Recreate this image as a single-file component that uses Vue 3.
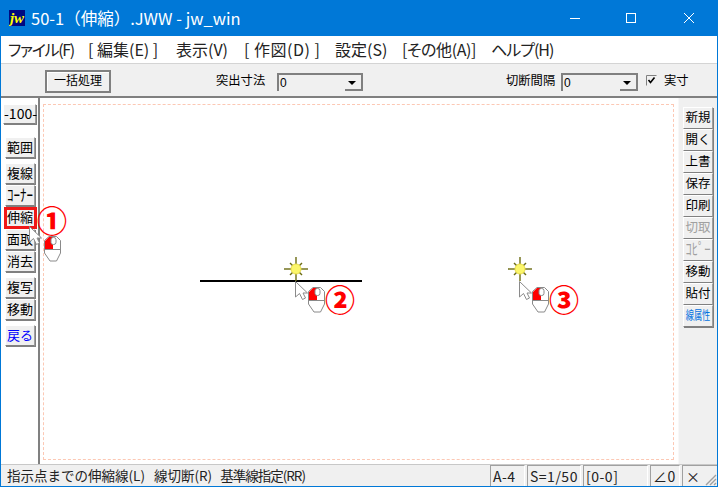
<script setup>
const menus = [
  { t: 'ファイル(F)', w: 80, s: -1.3 }, { t: '[ 編集(E) ]', w: 88, s: 0 }, { t: '表示(V)', w: 68, s: 0 },
  { t: '[ 作図(D) ]', w: 91, s: 0.5 }, { t: '設定(S)', w: 67, s: 0 }, { t: '[その他(A)]', w: 89, s: -0.4 }, { t: 'ヘルプ(H)', w: 70, s: -1 },
]
const leftGroups = [
  [{ t: '範囲' }],
  [{ t: '複線' }, { t: 'ｺｰﾅｰ', c: 'half' }, { t: '伸縮' }, { t: '面取' }, { t: '消去' }],
  [{ t: '複写' }, { t: '移動' }],
  [{ t: '戻る', c: 'blue' }],
]
const rightBtns = [
  { t: '新規' }, { t: '開く' }, { t: '上書' }, { t: '保存' }, { t: '印刷' },
  { t: '切取', c: 'off' }, { t: 'ｺﾋﾟｰ', c: 'off half' }, { t: '移動' }, { t: '貼付' }, { t: '線属性', c: 'attr' },
]
const panels = [
  { t: 'A-4', w: 35 }, { t: 'S=1/50', w: 54 }, { t: '[0-0]', w: 65 }, { t: '∠0', w: 30 },
]
const rays = [0, 45, 90, 135, 180, 225, 270, 315]
const marks = [
  { x: 28, y: 226, mx: 43, my: 236, cx: 36, cy: 205, n: '①', sun: false },
  { x: 294, y: 281, mx: 307, my: 287, cx: 324, cy: 284, n: '②', sun: true },
  { x: 518, y: 281, mx: 531, my: 287, cx: 548, cy: 284, n: '③', sun: true },
]
</script>

<template>
  <div class="win">
    <header class="title">
      <div class="logo"><span>jw</span></div>
      <div class="title-text">50-1（伸縮）.JWW - jw_win</div>
      <div class="caps">
        <svg width="46" height="36" viewBox="0 0 46 36"><path d="M18 18.5h10" stroke="#fff" fill="none"/></svg>
        <svg width="46" height="36" viewBox="0 0 46 36" class="cap-max"><rect x="18.5" y="13.5" width="9" height="9" stroke="#fff" fill="none"/></svg>
        <svg width="46" height="36" viewBox="0 0 46 36" class="cap-close"><path d="M18 13l10 10M28 13L18 23" stroke="#fff" fill="none"/></svg>
      </div>
    </header>

    <nav class="menu">
      <span v-for="m in menus" :key="m.t" class="menu-item" :style="{ width: m.w + 'px', letterSpacing: m.s + 'px' }">{{ m.t }}</span>
    </nav>

    <div class="toolbar">
      <button class="raised batch">一括処理</button>
      <span class="lbl lbl-a">突出寸法</span>
      <div class="combo combo-a"><span>0</span><i class="arrow"></i></div>
      <span class="lbl lbl-b">切断間隔</span>
      <div class="combo combo-b"><span>0</span><i class="arrow"></i></div>
      <span class="check">
        <svg width="11" height="11" viewBox="0 0 11 11"><path d="M.5 10.5v-10h10" stroke="#808080" fill="none"/><path d="M2.5 5l2 2.5L8.5 2.5" stroke="#000" stroke-width="1.6" fill="none"/></svg>
      </span>
      <span class="lbl">実寸</span>
    </div>

    <main class="body">
      <aside class="left">
        <button class="raised hundred">-100-</button>
        <div v-for="(g, i) in leftGroups" :key="i" class="group">
          <button v-for="b in g" :key="b.t" class="raised side-l" :class="b.c"><span>{{ b.t }}</span></button>
        </div>
      </aside>
      <section class="canvas">
        <div class="sheet"></div>
      </section>
      <aside class="right">
        <button v-for="b in rightBtns" :key="b.t" class="raised side-r" :class="b.c"><span>{{ b.t }}</span></button>
      </aside>
    </main>

    <footer class="status">
      <div class="hint"><span>指示点までの伸縮線(L)</span><span class="h2">線切断(R)</span><span class="h3">基準線指定(RR)</span></div>
      <div v-for="p in panels" :key="p.t" class="panel" :style="{ width: p.w + 'px' }">{{ p.t }}</div>
      <div class="panel last">
        ×
        <svg class="grip" width="13" height="13" viewBox="0 0 13 13"><path d="M12 2L2 12M12 6L6 12M12 10l-2 2" stroke="#a0a0a0" stroke-width="1.4" fill="none"/></svg>
      </div>
    </footer>

    <div class="line"></div>
    <div class="hl"></div>

    <template v-for="m in marks" :key="m.n">
      <svg v-if="m.sun" class="abs" :style="{ left: m.x - 12 + 'px', top: m.y - 25 + 'px' }" width="26" height="26" viewBox="0 0 26 26">
        <g stroke="#6b6b10" stroke-width="1.4">
          <line v-for="r in rays" :key="r" x1="13" y1="13" :x2="13 + ((r % 90) ? 8.5 : 12) * Math.cos(r * Math.PI / 180)" :y2="13 + ((r % 90) ? 8.5 : 12) * Math.sin(r * Math.PI / 180)"/>
        </g>
        <circle cx="13" cy="13" r="5" fill="#fbf66a" stroke="#eade48"/>
      </svg>
      <svg class="abs" :style="{ left: m.x + 'px', top: m.y + 'px' }" width="14" height="20" viewBox="0 0 14 20">
        <path d="M.5.5V16L4.5 12.5 7.5 18.5 10.5 17 8 12H12.5Z" fill="#fff" stroke="#8a8a8a"/>
      </svg>
      <svg class="abs" :style="{ left: m.mx + 'px', top: m.my + 'px' }" width="18" height="26" viewBox="0 0 18 26">
        <path d="M5 .5h7.5l4 4V17L12.5 25H6L.5 17V4.5Z" fill="#fff" stroke="#8a8a8a"/>
        <path d="M5 1L1 5v8h8V1Z" fill="#f00"/>
        <rect x="7" y="1.5" width="5" height="7" rx="2.2" fill="#fff" stroke="#8a8a8a"/>
        <path d="M1 13.5h16" stroke="#8a8a8a"/>
      </svg>
      <span class="num" :style="{ left: m.cx + 'px', top: m.cy + 'px' }">{{ m.n }}</span>
    </template>
  </div>
</template>

<style>
html, body { margin: 0; background: #fff; overflow: hidden; }
</style>

<style scoped>
.win {
  position: relative; width: 718px; height: 487px; box-sizing: border-box;
  display: flex; flex-direction: column; overflow: hidden;
  border: 1px solid #0078d7; border-top: 0; background: #f0f0f0;
  font-family: "Noto Sans CJK JP", "Noto Sans", sans-serif; color: #000;
}
.title { height: 36px; flex: none; margin: 0 -1px; background: #0078d7; color: #fff; display: flex; align-items: center; }
.logo { width: 16px; height: 16px; margin-left: 9px; background: #000a80; overflow: hidden; display: flex; align-items: center; justify-content: center; }
.logo span { color: #ff0; font: italic bold 15px/15px "Liberation Serif", serif; }
.title-text { margin-left: 6px; font-size: 16.5px; line-height: 36px; flex: 1; white-space: nowrap; }
.caps { display: flex; padding-right: 6px; }
.cap-max { margin-left: 10px; }
.cap-close { margin-left: 12px; }
.menu { height: 27px; flex: none; background: #fff; display: flex; align-items: center; padding-left: 7px; font-size: 16px; font-feature-settings: "palt"; color: #222; border-bottom: 1px solid #d4d4d4; }
.menu-item { white-space: nowrap; flex: none; line-height: 27px; }
.toolbar { height: 32px; flex: none; display: flex; align-items: center; padding-left: 44px; border-bottom: 2px solid #808080; font-size: 12.3px; box-sizing: content-box; }
.raised {
  box-sizing: border-box; margin: 0; padding: 0 0 2px; background: #f0f0f0; color: #000;
  font-family: "Noto Sans CJK JP", "Noto Sans", sans-serif; font-size: 13px; line-height: 1; white-space: nowrap;
  border: 1px solid; border-color: #fff #a0a0a0 #808080 #fff; box-shadow: 1px 1px 0 #808080;
}
.batch { width: 66px; height: 23px; font-size: 12px; margin-top: 2px; border: 2px solid #808080; box-shadow: inset 1px 1px 0 #fff; }
.lbl { white-space: nowrap; }
.lbl-a { margin-left: 105px; width: 61px; }
.lbl-b { margin-left: 143px; width: 55px; }
.combo {
  box-sizing: border-box; height: 18px; margin-top: 3px; position: relative; font: 12px/16px "Liberation Sans", sans-serif;
  border-top: 2px solid #808080; border-left: 2px solid #808080; border-right: 2px solid #808080; padding-left: 1px;
}
.combo-a { width: 86px; }
.combo-b { width: 77px; }
.arrow { position: absolute; right: 0; bottom: 0; width: 16px; height: 14px; border-bottom: 2px solid #808080; box-sizing: border-box; }
.arrow::after { content: ""; position: absolute; left: 3px; top: 4px; border: 4px solid transparent; border-top: 4px solid #000; border-bottom: 0; }
.check { margin-left: 8px; margin-right: 7px; display: flex; }
.body { flex: 1; display: flex; min-height: 0; }
.left { width: 37px; flex: none; background: #fff; box-sizing: border-box; padding: 6px 0 0 2px; display: flex; flex-direction: column; }
.group { display: flex; flex-direction: column; gap: 1px; margin-top: 5px; padding-left: 2px; }
.hundred { width: 33px; height: 20px; font-size: 14px; margin-bottom: 8px; flex: none; }
.side-l { width: 30px; height: 21px; font-size: 13px; flex: none; }
.canvas { flex: 1; border-left: 2px solid #808080; background: #fff; min-width: 0; padding: 6px 4px 4px 3px; display: flex; box-sizing: border-box; }
.sheet { flex: 1; border: 1px dashed #fcc8b4; }
.right { width: 39px; flex: none; box-sizing: border-box; padding: 9px 0 0 4px; display: flex; flex-direction: column; border-left: 1px solid #f8f8f8; }
.side-r { width: 30px; height: 22px; font-size: 12.5px; flex: none; }
.half span { display: inline-block; transform: scaleY(1.25); }
.blue { color: #0000ff; }
.off { color: #a0a0a0; }
.attr { color: #0070e0; font-size: 12px; }
.attr span { display: inline-block; transform: scaleX(.68); margin: 0 -6px; }
.status { height: 22px; flex: none; display: flex; align-items: stretch; font-size: 13.5px; border-top: 1px solid #c8c8c8; box-sizing: border-box; }
.hint { flex: 1; padding-left: 6px; line-height: 21px; white-space: nowrap; overflow: hidden; color: #222; }
.h2 { margin-left: 9px; }
.h3 { margin-left: 8px; letter-spacing: -1px; }
.panel { flex: none; box-sizing: border-box; margin-left: 2px; padding-left: 2px; border-left: 1px solid #a0a0a0; border-top: 1px solid #a0a0a0; border-right: 1px solid #fff; font-size: 14px; letter-spacing: .5px; line-height: 20px; color: #222; white-space: nowrap; }
.last { width: 35px; position: relative; padding-left: 3px; border-right: 0; }
.grip { position: absolute; right: 0; bottom: 0; }
.line { position: absolute; left: 199px; top: 280px; width: 162px; height: 2px; background: #000; }
.hl { position: absolute; left: 3px; top: 207px; width: 33px; height: 22px; box-sizing: border-box; border: 3px solid #f01818; }
.abs { position: absolute; }
.num { position: absolute; width: 29px; height: 29px; font-size: 30px; font-weight: 900; line-height: 29px; text-align: center; color: #f00; }
</style>
